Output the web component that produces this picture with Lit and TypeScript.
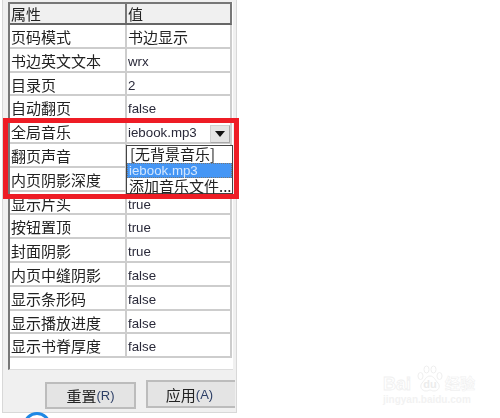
import { LitElement, html, css } from "lit";
import { customElement } from "lit/decorators.js";

const rows: [string, string][] = [
  ["页码模式", "书边显示"],
  ["书边英文文本", "wrx"],
  ["目录页", "2"],
  ["自动翻页", "false"],
  ["全局音乐", "iebook.mp3"],
  ["翻页声音", ""],
  ["内页阴影深度", ""],
  ["显示片头", "true"],
  ["按钮置顶", "true"],
  ["封面阴影", "true"],
  ["内页中缝阴影", "false"],
  ["显示条形码", "false"],
  ["显示播放进度", "false"],
  ["显示书脊厚度", "false"],
];

@customElement("app-root")
export class AppRoot extends LitElement {
  static styles = css`
    :host { display: block; width: 500px; height: 418px; position: relative; overflow: hidden; background: #fff;
      font-family: "Noto Sans CJK SC", "Liberation Sans", sans-serif; color: #222; }
    .panel { margin-left: 2px; width: 235px; height: 413px; box-sizing: border-box; background: #f0f0f0; border-left: 1px solid #d8d8d8; border-right: 1px solid #d8d8d8; border-bottom: 1px solid #d8d8d8; padding: 2px 3px 0 5px; display: flex; flex-direction: column; filter: blur(0.35px); }
    .list { height: 368px; box-sizing: border-box; background: #fff; border-left: 2px solid #777; border-bottom: 1px solid #ddd; }
    .row { display: grid; grid-template-columns: 115px 105px; width: 222px; height: 23.8px; box-sizing: border-box; border-bottom: 2px solid #cdcdcd; border-right: 2px solid #cdcdcd; font-size: 15px; line-height: 23px; }
    .row > div { padding-left: 1px; white-space: nowrap; overflow: hidden; }
    .row > div + div { border-left: 2px solid #cdcdcd; font-family: "Liberation Sans", sans-serif; font-size: 13.3px; line-height: 25px; padding-left: 1px; color: #2a2a3a; }
    .row > div.cjk { font-family: "Noto Sans CJK SC", sans-serif; font-size: 15px; line-height: 23px; color: #222; }
    .head { height: 23px; background: #f0f0f0; border-top: 2px solid #777; border-right: 2px solid #777; border-bottom: 2px solid #666; line-height: 20px; }
    .head > div + div { font-family: "Noto Sans CJK SC", sans-serif; font-size: 15px; line-height: 20px; color: #222; border-left-color: #777; }
    .btns { display: flex; gap: 10px; padding: 12px 0 0 37px; align-items: flex-start; }
    .btn { width: 91px; height: 27px; flex: none; box-sizing: border-box; background: #e4e4e4; border: 2px solid #bcbcbc; font-size: 15px; display: flex; align-items: center; justify-content: center; }
    .btn.apply { margin-top: -2px; height: 28px; width: 89px; border-right: none; padding-right: 4px; }
    .btn span { font-family: "Liberation Sans", sans-serif; font-size: 13px; color: #2d3f66; }
    .combo-arrow { position: absolute; left: 210px; top: 125px; width: 20px; height: 18px; box-sizing: border-box; background: #e4e4e4; border: 1px solid #d0d0d0; border-right-color: #a8a8a8; border-bottom-color: #a8a8a8; display: flex; align-items: center; justify-content: center; filter: blur(0.35px); }
    .combo-arrow::after { content: ""; border: 5px solid transparent; border-top: 6px solid #111; border-bottom: none; }
    .drop { position: absolute; left: 126px; top: 145px; width: 107px; height: 49px; box-sizing: border-box; background: #fff; border: 1px solid #444; font-size: 15px; line-height: 16px; filter: blur(0.35px); }
    .drop div { white-space: nowrap; padding-left: 2px; }
    .drop .none { height: 17px; padding-left: 3px; }
    .drop .sel { height: 15px; line-height: 15px; background: #4596f5; color: #d3e6fd; font-family: "Liberation Sans", sans-serif; font-size: 13.3px; outline: 1px dotted #777; outline-offset: -1px; }
    .drop .add { height: 15px; }
    .hl { position: absolute; left: 3px; top: 118px; width: 236px; height: 81px; box-sizing: border-box; border: 5px solid #ee1c25; pointer-events: none; }
    .circle { position: absolute; left: 23px; top: 412px; width: 28px; height: 28px; box-sizing: border-box; border: 3px solid #1e88e5; border-radius: 50%; }
    .wm { position: absolute; left: 383px; top: 365px; color: #fff; font-family: "Liberation Sans", "Noto Sans CJK SC", sans-serif; font-weight: bold; display: flex; flex-direction: column; gap: 3px; }
    .wm .top { display: flex; align-items: flex-end; gap: 6px; }
    .wm .word { font-size: 18px; line-height: 16px; -webkit-text-stroke: 0.8px #f0f0f0; }
    .wm .cn { font-size: 15px; line-height: 16px; margin-left: -4px; -webkit-text-stroke: 0.6px #f0f0f0; }
    .paw { width: 26px; height: 27px; display: flex; align-items: flex-end; justify-content: center; position: relative; }
    .paw svg { position: absolute; inset: 0; }
    .paw span { position: relative; font-size: 11px; line-height: 15px; color: #ececec; }
    .wm .url { font-size: 10px; line-height: 10px; color: #f2f2f2; white-space: nowrap; }
  `;

  render() {
    return html`
      <div class="panel">
        <div class="list">
          <div class="row head"><div>属性</div><div>值</div></div>
          ${rows.map(([k, v], i) => html`<div class="row"><div>${k}</div><div class=${i === 0 ? "cjk" : ""}>${v}</div></div>`)}
        </div>
        <div class="btns">
          <div class="btn">重置<span>(R)</span></div>
          <div class="btn apply">应用<span>(A)</span></div>
        </div>
      </div>
      <div class="combo-arrow"></div>
      <div class="drop">
        <div class="none">[无背景音乐]</div>
        <div class="sel">iebook.mp3</div>
        <div class="add">添加音乐文件...</div>
      </div>
      <div class="hl"></div>
      <div class="circle"></div>
      <div class="wm">
        <div class="top">
          <span class="word">Bai</span>
          <div class="paw">
            <svg width="26" height="27" viewBox="0 0 26 27" fill="#fff" stroke="#efefef" stroke-width="1">
              <ellipse cx="3.5" cy="11" rx="2.5" ry="3.5"></ellipse>
              <ellipse cx="9.5" cy="4.5" rx="2.5" ry="3.5"></ellipse>
              <ellipse cx="16.5" cy="4.5" rx="2.5" ry="3.5"></ellipse>
              <ellipse cx="22.5" cy="11" rx="2.5" ry="3.5"></ellipse>
              <path d="M13 11c4 0 5 4 8 7 3 4 0 8-4 8-2 0-3-1-4-1s-2 1-4 1c-4 0-7-4-4-8 3-3 4-7 8-7z"></path>
            </svg>
            <span>du</span>
          </div>
          <span class="cn">经验</span>
        </div>
        <div class="url">jingyan.baidu.com</div>
      </div>
    `;
  }
}
